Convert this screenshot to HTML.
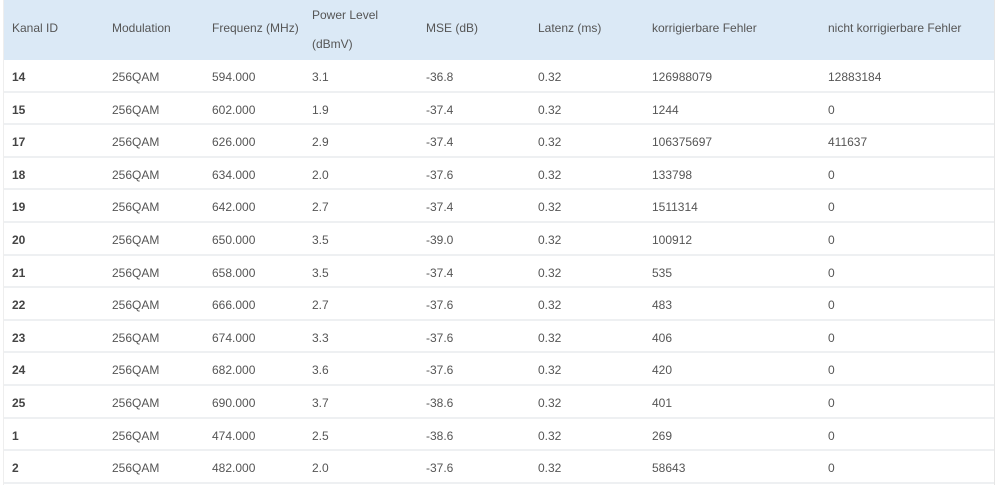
<!DOCTYPE html>
<html><head><style>
body{margin:0;background:#fff;font-family:"Liberation Sans",sans-serif;font-size:12px;color:#555;}
.wrap{position:absolute;left:3px;top:0;width:990px;height:485px;border-right:1px solid #e6e6e6;border-left:1px solid #eee;}
.head{position:absolute;left:0;top:0;width:990px;height:60px;background:#dbe9f6;}
.c{position:absolute;white-space:nowrap;}
.row{position:absolute;left:0;width:990px;height:32.6px;border-bottom:2px solid #eef0f2;box-sizing:border-box;}
.row .c{top:10px;}
.b{font-weight:bold;color:#444;}
</style></head><body>
<div class="wrap">
<div class="head">
<div class="c" style="left:8px;top:21px">Kanal ID</div>
<div class="c" style="left:108px;top:21px">Modulation</div>
<div class="c" style="left:208px;top:21px">Frequenz (MHz)</div>
<div class="c" style="left:308px;top:8px">Power Level</div>
<div class="c" style="left:308px;top:37px">(dBmV)</div>
<div class="c" style="left:422px;top:21px">MSE (dB)</div>
<div class="c" style="left:534px;top:21px">Latenz (ms)</div>
<div class="c" style="left:648px;top:21px">korrigierbare Fehler</div>
<div class="c" style="left:824px;top:21px">nicht korrigierbare Fehler</div>
</div>
<div id="rows"></div>
</div>
<script>
var d=[["14","594.000","3.1","-36.8","126988079","12883184"],["15","602.000","1.9","-37.4","1244","0"],["17","626.000","2.9","-37.4","106375697","411637"],["18","634.000","2.0","-37.6","133798","0"],["19","642.000","2.7","-37.4","1511314","0"],["20","650.000","3.5","-39.0","100912","0"],["21","658.000","3.5","-37.4","535","0"],["22","666.000","2.7","-37.6","483","0"],["23","674.000","3.3","-37.6","406","0"],["24","682.000","3.6","-37.6","420","0"],["25","690.000","3.7","-38.6","401","0"],["1","474.000","2.5","-38.6","269","0"],["2","482.000","2.0","-37.6","58643","0"]];
var h="";d.forEach(function(r,i){var t=60+i*32.6;
h+='<div class="row" style="top:'+t+'px"><div class="c b" style="left:8px">'+r[0]+'</div><div class="c" style="left:108px">256QAM</div><div class="c" style="left:208px">'+r[1]+'</div><div class="c" style="left:308px">'+r[2]+'</div><div class="c" style="left:422px">'+r[3]+'</div><div class="c" style="left:534px">0.32</div><div class="c" style="left:648px">'+r[4]+'</div><div class="c" style="left:824px">'+r[5]+'</div></div>';});
document.getElementById("rows").innerHTML=h;
</script>
</body></html>
